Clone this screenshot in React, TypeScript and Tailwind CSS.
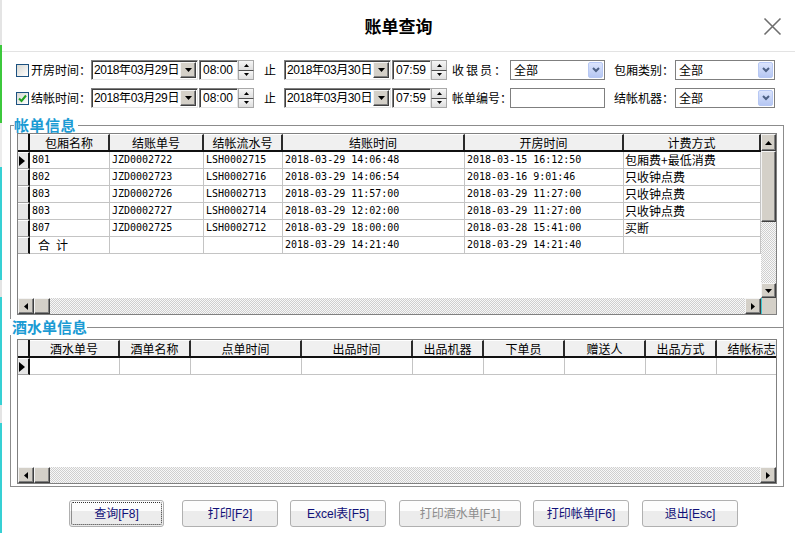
import React from 'react';

const cjk = "font-['Noto_Sans_CJK_SC',sans-serif]";
const sans = "font-['Liberation_Sans','Noto_Sans_CJK_SC',sans-serif]";
const mono = "font-['DejaVu_Sans_Mono','Noto_Sans_CJK_SC',monospace]";

const raised =
  'bg-[#d4d0c8] border border-t-[#f4f4f4] border-l-[#f4f4f4] border-r-[#404040] border-b-[#404040] shadow-[inset_-1px_-1px_0_#808080] flex items-center justify-center shrink-0';
const sunken =
  'bg-white border border-t-[#808080] border-l-[#808080] border-r-[#e4e4e4] border-b-[#e4e4e4] shadow-[inset_1px_1px_0_#404040]';
const checker =
  'bg-[image:repeating-conic-gradient(#cfcfcf_0%_25%,#f8f8f8_0%_50%)] bg-[length:2px_2px]';
const frameLine = 'border-[#8c8c8c]';

type Dir = 'up' | 'down' | 'left' | 'right';

function Arrow({ dir, small }: { dir: Dir; small?: boolean }) {
  const a = small ? 5 : 7;
  const b = small ? 3 : 4;
  const horiz = dir === 'up' || dir === 'down';
  const pts = {
    up: `0,${b} ${a},${b} ${a / 2},0`,
    down: `0,0 ${a},0 ${a / 2},${b}`,
    left: `${b},0 ${b},${a} 0,${a / 2}`,
    right: `0,0 0,${a} ${b},${a / 2}`,
  }[dir];
  return (
    <svg width={horiz ? a : b} height={horiz ? b : a} viewBox={horiz ? `0 0 ${a} ${b}` : `0 0 ${b} ${a}`}>
      <polygon points={pts} fill="#000" />
    </svg>
  );
}

function Checkbox({ checked }: { checked?: boolean }) {
  return (
    <div className="w-[13px] h-[13px] shrink-0 border border-[#1c5180] bg-[linear-gradient(135deg,#d8d8d2,#ffffff)] flex items-center justify-center">
      {checked && (
        <svg width="9" height="9" viewBox="0 0 9 9">
          <path d="M1 4.5 L3.5 7 L8 1.5" stroke="#21a121" strokeWidth="2" fill="none" />
        </svg>
      )}
    </div>
  );
}

function DateBox({ value }: { value: string }) {
  return (
    <div className={`${sunken} w-[107px] h-[20px] flex items-center pl-[2px] pr-[1px] shrink-0`}>
      <span className={`flex-1 min-w-0 overflow-hidden whitespace-nowrap text-[12px] tracking-[-0.4px] leading-none ${sans}`}>
        {value}
      </span>
      <div className={`${raised} w-[16px] h-[16px]`}>
        <Arrow dir="down" />
      </div>
    </div>
  );
}

function TimeBox({ value }: { value: string }) {
  return (
    <div className="flex h-[20px] ml-[1px] shrink-0">
      <div className={`${sunken} w-[39px] h-full flex items-center pl-[3px] text-[12px] leading-none whitespace-nowrap ${sans}`}>
        {value}
      </div>
      <div className="w-[16px] h-full flex flex-col">
        <div className="flex-1 bg-[linear-gradient(#f6f6f6,#dedede)] border border-[#a8a8a8] border-b-[#505050] flex items-center justify-center">
          <Arrow dir="up" small />
        </div>
        <div className="flex-1 bg-[linear-gradient(#f6f6f6,#dedede)] border border-t-0 border-[#a8a8a8] flex items-center justify-center">
          <Arrow dir="down" small />
        </div>
      </div>
    </div>
  );
}

function Select({ width }: { width: string }) {
  return (
    <div className={`${width} h-[20px] shrink-0 border border-[#7f7f7f] bg-white flex items-center pl-[3px] pr-[1px]`}>
      <span className={`flex-1 text-[12px] leading-none ${cjk}`}>全部</span>
      <div className="w-[15px] h-[16px] rounded-[2px] border border-[#b7c8f4] bg-[linear-gradient(#dbe4fc,#b6c7f3)] flex items-center justify-center">
        <svg width="8" height="6" viewBox="0 0 8 6">
          <path d="M1 1 L4 4 L7 1" stroke="#4d6185" strokeWidth="2" fill="none" />
        </svg>
      </div>
    </div>
  );
}

function Label({ text, className = '' }: { text: string; className?: string }) {
  return <span className={`text-[12px] leading-none whitespace-nowrap shrink-0 ${cjk} ${className}`}>{text}</span>;
}

function HScroll() {
  return (
    <div className="flex-1 flex h-full min-w-0">
      <div className={`${raised} w-[16px] h-full`}>
        <Arrow dir="left" />
      </div>
      <div className={`${raised} w-[16px] h-full`} />
      <div className={`flex-1 ${checker}`} />
      <div className={`${raised} w-[16px] h-full`}>
        <Arrow dir="right" />
      </div>
    </div>
  );
}

type Col = { label: string; w: string };

function HeaderRow({ cols }: { cols: Col[] }) {
  return (
    <div className="flex h-[18px] border-b-2 border-b-[#101010]">
      <div className="w-[12px] shrink-0 h-full bg-[#f0f0f0] border-r-2 border-r-[#101010]" />
      {cols.map((c) => (
        <div
          key={c.label}
          className={`${c.w} shrink-0 h-full bg-[#f0f0f0] border-r-2 border-r-[#2a2a2a] border-t border-t-white flex items-center justify-center text-[12px] leading-none whitespace-nowrap ${cjk}`}
        >
          {c.label}
        </div>
      ))}
    </div>
  );
}

function DataRow({ cols, cells, current }: { cols: Col[]; cells: string[]; current?: boolean }) {
  return (
    <div className="flex h-[17px]">
      <div className="w-[12px] shrink-0 h-full bg-[#e6e6e6] border-r-2 border-r-[#101010] border-b border-b-[#a0a0a0] border-t border-t-white flex items-center pl-[1px]">
        {current && (
          <svg width="6" height="10" viewBox="0 0 6 10">
            <polygon points="0,0 0,10 6,5" fill="#000" />
          </svg>
        )}
      </div>
      {cols.map((c, i) => {
        const v = cells[i] ?? '';
        const isCjk = /[\u4e00-\u9fff]/.test(v);
        return (
          <div
            key={c.label}
            className={`${c.w} shrink-0 h-full border-r border-b border-[#c4c4c4] flex items-center whitespace-nowrap overflow-hidden leading-none ${
              isCjk ? `text-[12px] ${cjk}` : `text-[10px] pl-[2px] ${mono}`
            } ${v === '合 计' ? 'pl-[8px]' : isCjk ? 'pl-[1px]' : ''}`}
          >
            {v === '合 计' ? <span className="tracking-[6px]">合计</span> : v}
          </div>
        );
      })}
    </div>
  );
}

const billCols: Col[] = [
  { label: '包厢名称', w: 'w-[80px]' },
  { label: '结账单号', w: 'w-[94px]' },
  { label: '结帐流水号', w: 'w-[79px]' },
  { label: '结账时间', w: 'w-[182px]' },
  { label: '开房时间', w: 'w-[159px]' },
  { label: '计费方式', w: 'w-[137px]' },
];

const billRows = [
  ['801', 'JZD0002722', 'LSH0002715', '2018-03-29 14:06:48', '2018-03-15 16:12:50', '包厢费+最低消费'],
  ['802', 'JZD0002723', 'LSH0002716', '2018-03-29 14:06:54', '2018-03-16 9:01:46', '只收钟点费'],
  ['803', 'JZD0002726', 'LSH0002713', '2018-03-29 11:57:00', '2018-03-29 11:27:00', '只收钟点费'],
  ['803', 'JZD0002727', 'LSH0002714', '2018-03-29 12:02:00', '2018-03-29 11:27:00', '只收钟点费'],
  ['807', 'JZD0002725', 'LSH0002712', '2018-03-29 18:00:00', '2018-03-28 15:41:00', '买断'],
  ['合 计', '', '', '2018-03-29 14:21:40', '2018-03-29 14:21:40', ''],
];

const drinkCols: Col[] = [
  { label: '酒水单号', w: 'w-[90px]' },
  { label: '酒单名称', w: 'w-[71px]' },
  { label: '点单时间', w: 'w-[111px]' },
  { label: '出品时间', w: 'w-[111px]' },
  { label: '出品机器', w: 'w-[71px]' },
  { label: '下单员', w: 'w-[81px]' },
  { label: '赠送人', w: 'w-[81px]' },
  { label: '出品方式', w: 'w-[71px]' },
  { label: '结帐标志', w: 'w-[71px]' },
];

function Btn({
  text,
  className,
  disabled,
  focused,
}: {
  text: string;
  className: string;
  disabled?: boolean;
  focused?: boolean;
}) {
  return (
    <div
      className={`${className} h-[27px] shrink-0 rounded-[3px] border border-[#b0b0b0] bg-[linear-gradient(to_bottom,#fdfdfd_0%,#fdfdfd_42%,#ececec_42%,#ececec_100%)] p-[1px]`}
    >
      <div
        className={`w-full h-full rounded-[2px] flex items-center justify-center text-[12px] leading-none ${sans} ${
          focused ? 'border border-dotted border-[#303030]' : ''
        } ${disabled ? 'text-[#8d8d8d]' : 'text-[#101078]'}`}
      >
        {text}
      </div>
    </div>
  );
}

export default function App() {
  return (
    <div className="w-[795px] h-[542px] flex bg-white overflow-hidden text-black">
      {/* left window edge */}
      <div className="w-[2px] shrink-0 flex flex-col">
        <div className="h-[45px] bg-[#e4e4e4]" />
        <div className="h-[78px] bg-[#3cc83c]" />
        <div className="h-[44px] bg-[#ececec]" />
        <div className="h-[113px] bg-[#36d0d4]" />
        <div className="h-[17px] bg-[#e4e4e4]" />
        <div className="h-[108px] bg-[#36d0d4]" />
        <div className="h-[18px] bg-[#e4e4e4]" />
        <div className="h-[110px] bg-[#36d0d4]" />
        <div className="flex-1" />
      </div>

      <div className="flex-1 flex flex-col min-w-0">
        {/* title bar */}
        <div className="h-[52px] shrink-0 border-b border-[#e3e3e3] grid grid-cols-[1fr_auto_1fr] items-center">
          <div />
          <div className={`text-[17px] font-bold leading-none ${cjk}`}>账单查询</div>
          <div className="justify-self-end mr-[13px] mt-[2px]">
            <svg width="19" height="19" viewBox="0 0 19 19">
              <path d="M1.5 1.5 L17.5 17.5 M17.5 1.5 L1.5 17.5" stroke="#6e6e6e" strokeWidth="1.6" />
            </svg>
          </div>
        </div>

        {/* filters */}
        <div className="pl-[14px] pt-[8px] flex flex-col gap-[8px]">
          <div className="flex items-center h-[20px]">
            <Checkbox />
            <Label text="开房时间：" className="ml-[2px] w-[60px]" />
            <DateBox value="2018年03月29日" />
            <TimeBox value="08:00" />
            <Label text="止" className="ml-[10px] w-[20px]" />
            <DateBox value="2018年03月30日" />
            <TimeBox value="07:59" />
            <Label text="收银员：" className="ml-[5px] w-[58px] tracking-[2px]" />
            <Select width="w-[95px]" />
            <Label text="包厢类别：" className="ml-[9px] w-[61px]" />
            <Select width="w-[100px]" />
          </div>
          <div className="flex items-center h-[20px]">
            <Checkbox checked />
            <Label text="结帐时间：" className="ml-[2px] w-[60px]" />
            <DateBox value="2018年03月29日" />
            <TimeBox value="08:00" />
            <Label text="止" className="ml-[10px] w-[20px]" />
            <DateBox value="2018年03月30日" />
            <TimeBox value="07:59" />
            <Label text="帐单编号：" className="ml-[5px] w-[58px]" />
            <div className="w-[95px] h-[20px] shrink-0 border border-[#7f7f7f] bg-white" />
            <Label text="结帐机器：" className="ml-[9px] w-[61px]" />
            <Select width="w-[100px]" />
          </div>
        </div>

        {/* grouped grids */}
        <div className="ml-[8px] mt-[9px] w-[774px] flex flex-col">
          <div className="flex h-[16px]">
            <div className={`w-[4px] h-[8px] self-end border-t border-l ${frameLine}`} />
            <span className={`text-[15px] leading-[16px] font-bold tracking-[0.5px] text-[#1b9bd4] ${cjk}`}>帐单信息</span>
            <div className={`flex-1 h-[8px] self-end border-t border-r ml-[2px] ${frameLine}`} />
          </div>
          <div className={`border-l border-r ${frameLine} pl-[6px] h-[186px]`}>
            <div className="w-[760px] h-[182px] border border-[#808080] flex flex-col bg-white">
              <div className="flex flex-1 min-h-0">
                <div className="flex-1 min-w-0 overflow-hidden">
                  <HeaderRow cols={billCols} />
                  {billRows.map((r, i) => (
                    <DataRow key={i} cols={billCols} cells={r} current={i === 0} />
                  ))}
                </div>
                <div className="w-[15px] shrink-0 flex flex-col">
                  <div className={`${raised} h-[17px] w-full`}>
                    <Arrow dir="up" />
                  </div>
                  <div className={`${raised} h-[71px] w-full`} />
                  <div className={`flex-1 ${checker}`} />
                  <div className={`${raised} h-[15px] w-full`}>
                    <Arrow dir="down" />
                  </div>
                </div>
              </div>
              <div className="flex h-[16px] shrink-0">
                <HScroll />
                <div className="w-[15px] shrink-0 bg-[#d4d0c8] border-l border-l-[#3cc8d4]" />
              </div>
            </div>
          </div>

          <div className="flex h-[16px] items-center">
            <span className={`ml-[2px] text-[15px] leading-[16px] font-bold text-[#1b9bd4] ${cjk}`}>酒水单信息</span>
            <div className={`flex-1 h-full border-r ${frameLine} flex items-center`}>
              <div className={`w-full border-t ${frameLine}`} />
            </div>
          </div>
          <div className={`border-l border-r border-b ${frameLine} pl-[6px] pt-[4px] pb-[2px]`}>
            <div className="w-[760px] h-[145px] border border-[#808080] flex flex-col bg-white">
              <div className="flex-1 min-h-0 overflow-hidden">
                <HeaderRow cols={drinkCols} />
                <DataRow cols={drinkCols} cells={[]} current />
              </div>
              <div className="flex h-[16px] shrink-0">
                <HScroll />
              </div>
            </div>
          </div>
        </div>

        {/* buttons */}
        <div className="flex mt-[13px] pl-[67px]">
          <Btn text="查询[F8]" className="w-[95px]" focused />
          <Btn text="打印[F2]" className="w-[96px] ml-[18px]" />
          <Btn text="Excel表[F5]" className="w-[96px] ml-[12px]" />
          <Btn text="打印酒水单[F1]" className="w-[122px] ml-[13px]" disabled />
          <Btn text="打印帐单[F6]" className="w-[96px] ml-[12px]" />
          <Btn text="退出[Esc]" className="w-[96px] ml-[13px]" />
        </div>
      </div>
    </div>
  );
}
